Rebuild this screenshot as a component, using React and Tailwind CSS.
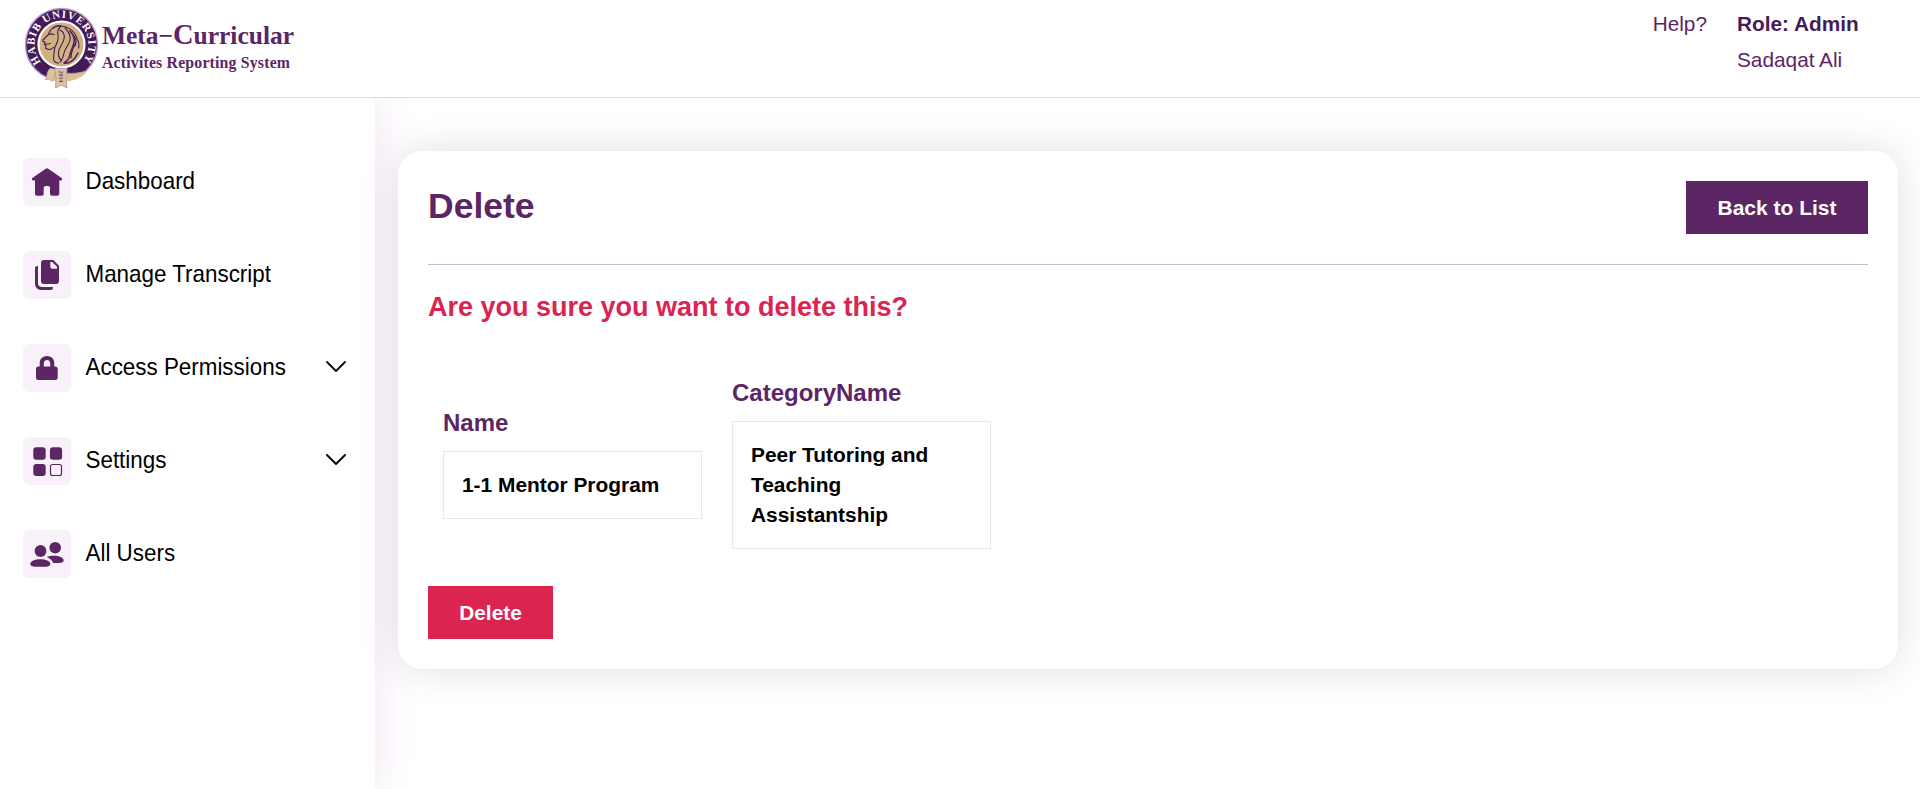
import React from "react";

const P = "#5c2564";

function Logo() {
  return (
    <svg width="290" height="97" viewBox="0 0 290 97" className="block shrink-0">
      <defs>
        <path id="ring" d="M17.200 62.500 A27 27 0 1 1 58.200 62.200" />
      </defs>
      <circle cx="37.500" cy="44.500" r="36" fill="#451a58" stroke="#b79ac6" strokeWidth="1.4" />
      <circle cx="37.500" cy="44.500" r="23" fill="#d0b182" stroke="#fff" strokeWidth="2.200" />
      <text fill="#fff" fontFamily="Liberation Serif, serif" fontWeight="700" fontSize="11">
        <textPath href="#ring" startOffset="0.500" textLength="120">HABIB UNIVERSITY</textPath>
      </text>
      <g fill="none" stroke="#451a58" strokeWidth="1.100" strokeLinecap="round" strokeLinejoin="round">
        <path d="M37 26c-6 0-9 2-11 5l-2 4-5 5c-.8 1.500 1 2 2 2l-.6 2.500 1.600.8-.4 3c3 2 6 1 8-1" />
        <path d="M25 34.500c2-1 3.500-.8 5 .2M20.500 44.500l6-1M29 28c2-2 5-3 8-2 9 1 15 7 16 13 2 3 2.500 6 1.500 9" />
        <path d="M37 26c-3 3-4 6-3 9 1 5-1 8-3 12-1 4-1 7-1.500 11 0 3 2 5 5 5" />
        <path d="M36 30c4 2 5 5 4 9-1 5-5 8-5.500 13-.3 3 .5 6 2.500 8" />
        <path d="M41 28c4 4 6 8 5 12-1 5-5 8-6 13-.7 4-2 7-4 9" />
        <path d="M46 31c5 5 5 10 3 15-2 5-3 8-4 12-1 2-3 4-5 5 6 1 11-4 14-10" strokeWidth="1.500" />
        <path d="M52 42c-2 5-5 9-5 16M49 35c4 4 4 7 2 11" />
      </g>
      <path d="M26 68.500c10 5.500 21 6.500 37.500 2-5 7.500-14 11-24 11-6 0-11-1-16-3z" fill="#dcc092" />
      <path d="M42 73c7 .8 14 .2 21-2.500" fill="none" stroke="#a687b0" strokeWidth=".8" />
      <path d="M26 68.500c-4 4-2 8-5 11.500l4-1 3 2.500c3-4 2-8 4-12z" fill="#dfc497" stroke="#c0a3bb" strokeWidth=".9" />
      <path d="M31 68.500h12l-1 10 1 9.500-5.700-3-5.800 3 .5-9.500z" fill="#dfc497" stroke="#b79ac6" strokeWidth="1" />
      <text transform="translate(35 70.500) rotate(90)" fill="#69436e" fontFamily="Liberation Serif, serif" fontWeight="700" fontSize="6" textLength="12">2014</text>
      <g fill={P} fontFamily="Liberation Serif, serif" fontWeight="700">
        <text x="78" y="44" fontSize="25.500" textLength="192" lengthAdjust="spacing">
          Meta−<tspan fontSize="28.500">C</tspan>urricular
        </text>
        <text x="78" y="67.500" fontSize="15.800" textLength="188" lengthAdjust="spacing">Activites Reporting System</text>
      </g>
    </svg>
  );
}

const HomeIcon = () => (
  <path d="M22.700 10.800a2 2 0 0 1 2.600 0l13.300 9.200c1 .9.500 2.600-.8 2.600h-1.500v13.100a2 2 0 0 1-2 2H29a2 2 0 0 1-2-2v-6.200c0-2-6.300-2-6.300 0v6.200a2 2 0 0 1-2 2H14a2 2 0 0 1-2-2V22.600h-1.800c-1.300 0-1.800-1.700-.8-2.600z" />
);
const DocsIcon = () => (
  <>
    <path d="M21 9h9.300L36 14.800V30a3 3 0 0 1-3 3H21a3 3 0 0 1-3-3V12a3 3 0 0 1 3-3z" />
    <path d="M27.300 11v4.800a2 2 0 0 0 2 2H34v-2l-4.800-4.800z" fill="#f8f1f9" />
    <path d="M12 17c0-1.500 1.400-2 3-2v17a4 4 0 0 0 4 4h11c0 1.600-.5 3-2 3H18a6 6 0 0 1-6-6z" />
  </>
);
const LockIcon = () => (
  <path fillRule="evenodd" d="M16.700 22.500V19.300C16.700 15 19.700 12 24 12s7.300 3 7.300 7.300V22.500h.9a2.500 2.500 0 0 1 2.500 2.500v8.500a2.500 2.500 0 0 1-2.500 2.500H15.500a2.500 2.500 0 0 1-2.500-2.500V25a2.500 2.500 0 0 1 2.500-2.500zm4.100 0h6.400V19.300c0-2-1.200-3.300-3.200-3.300s-3.200 1.300-3.200 3.300z" />
);
const GridIcon = () => (
  <>
    <rect x="10.300" y="10.300" width="12.400" height="12.400" rx="3" />
    <rect x="26.900" y="10.300" width="12.200" height="12.400" rx="3" />
    <rect x="10.300" y="27" width="12.400" height="12" rx="3" />
    <rect x="27.500" y="27.500" width="11" height="11" rx="2" fill="none" stroke={P} strokeWidth="1.200" />
  </>
);
const UsersIcon = () => (
  <>
    <circle cx="17.500" cy="21" r="5.900" />
    <circle cx="32.200" cy="17.700" r="5.800" />
    <path d="M7.300 34c0-3 4.500-4.700 10-4.700s10 1.700 10 4.700c0 1.800-1.800 2.700-4.500 2.700H12c-2.700 0-4.700-.9-4.700-2.700z" />
    <path d="M23.700 26.900c2-.8 4.500-1.200 7-1.200 5.500 0 10 2 10 4.600 0 1.700-2 2.700-4 2.700h-6.500c-.6-2.400-3-4.700-6.500-6.100z" />
  </>
);

const items = [
  { label: "Dashboard", Icon: HomeIcon },
  { label: "Manage Transcript", Icon: DocsIcon },
  { label: "Access Permissions", Icon: LockIcon, more: true },
  { label: "Settings", Icon: GridIcon, more: true },
  { label: "All Users", Icon: UsersIcon },
];

function NavItem({ label, Icon, more }) {
  return (
    <li className="flex h-12 items-center">
      <span className="h-12 w-12 shrink-0 rounded-md bg-[#f8f1f9]">
        <svg width="48" height="48" viewBox="0 0 48 48" fill={P}><Icon /></svg>
      </span>
      <span className="mb-[3px] ml-[14.500px] flex-1 scale-y-[1.08] text-[22.4px] leading-[30px] whitespace-nowrap text-black">{label}</span>
      {more && (
        <svg width="20" height="12" viewBox="0 0 20 12" fill="none" stroke="#000" strokeWidth="1.800" strokeLinecap="round" strokeLinejoin="round" className="mb-[3px]">
          <path d="M1 1l9 9 9-9" />
        </svg>
      )}
    </li>
  );
}

function Field({ label, children }) {
  return (
    <div className="w-[259px]">
      <div className="mb-[12px] text-[24px] leading-[32px] font-bold text-[#5c2564]">{label}</div>
      <div className="border border-[#e8e8e8] px-[18px] py-[18px] text-[20.9px] leading-[30px] font-bold text-black">{children}</div>
    </div>
  );
}

export default function App() {
  return (
    <div className="flex h-[789px] w-full flex-col overflow-hidden bg-white font-['Liberation_Sans',Arial,sans-serif]">
      <header className="relative z-10 flex h-[98px] shrink-0 justify-between border-b border-[#d9d9db] bg-white pr-[60px] pl-6">
        <Logo />
        <div className="flex gap-[30px] pt-[6px] text-[20.8px] leading-[36px] text-[#5c2564]">
          <span>Help?</span>
          <div className="w-[123px]">
            <div className="font-bold whitespace-nowrap text-[#451a58]">Role: Admin</div>
            <div>Sadaqat Ali</div>
          </div>
        </div>
      </header>
      <div className="flex flex-1">
        <aside className="w-[375px] shrink-0 bg-white pt-[60px] pr-[29.500px] pl-[23px] shadow-[0_0_40px_#efe0f1]">
          <ul className="flex flex-col gap-[45px]">
            {items.map((it) => <NavItem key={it.label} {...it} />)}
          </ul>
        </aside>
        <main className="flex-1 pt-[53px] pr-[22px] pl-[23px]">
          <section className="h-[518px] rounded-[24px] bg-white p-[30px] shadow-[0_0_40px_rgba(0,0,0,0.13)]">
            <div className="flex h-[84px] items-start justify-between border-b border-[#cbb8d0]">
              <h1 className="pt-1 text-[35.5px] leading-[42px] font-bold text-[#5c2564]">Delete</h1>
              <button className="h-[53px] w-[182px] bg-[#5c2564] text-[21px] font-bold text-white">Back to List</button>
            </div>
            <h2 className="mt-[26px] text-[27px] leading-[32px] font-bold text-[#dc2450]">Are you sure you want to delete this?</h2>
            <div className="mt-[54px] flex items-center gap-[30px] pl-[15px]">
              <Field label="Name">1-1 Mentor Program</Field>
              <Field label="CategoryName">Peer Tutoring and Teaching Assistantship</Field>
            </div>
            <button className="mt-[37px] h-[53px] w-[125px] bg-[#dc2450] text-[20.8px] font-bold text-white">Delete</button>
          </section>
        </main>
      </div>
    </div>
  );
}
